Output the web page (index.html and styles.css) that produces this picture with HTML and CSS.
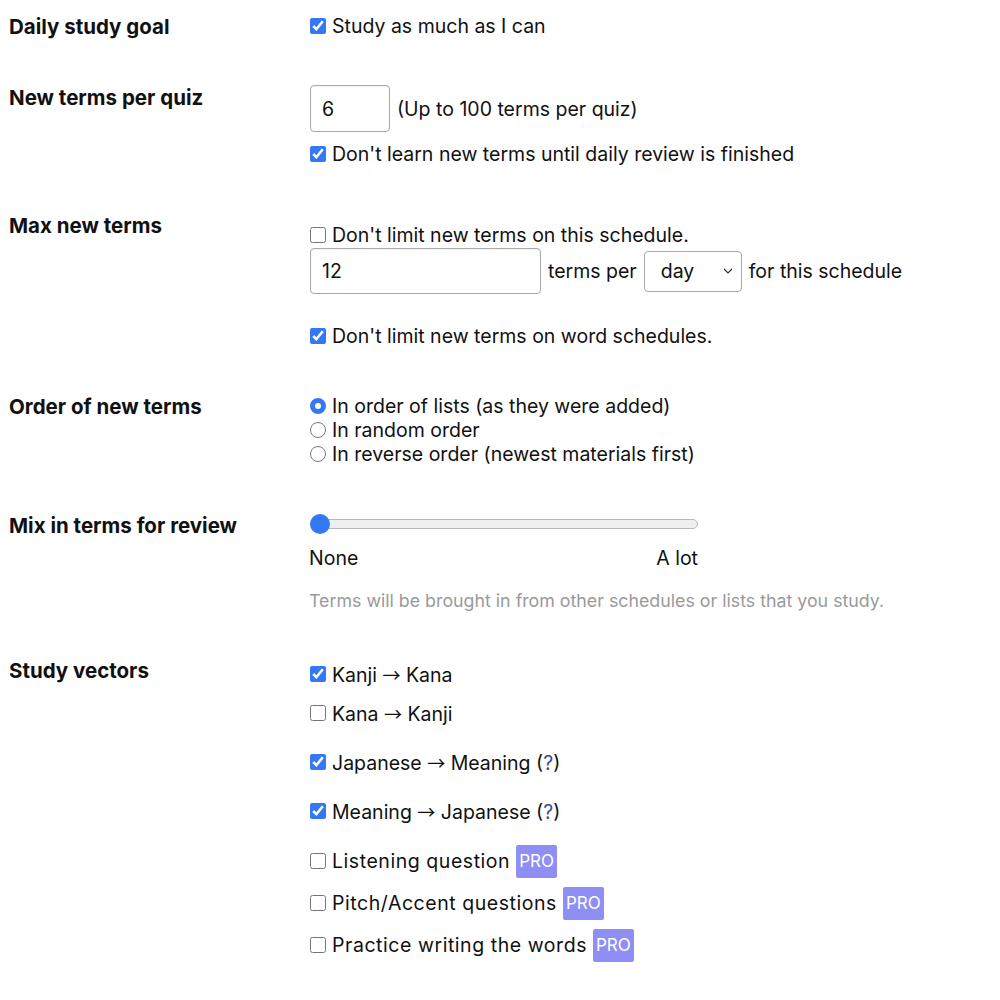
FILE: index.html
```html
<!DOCTYPE html>
<html>
<head>
<meta charset="utf-8">
<link rel="stylesheet" href="styles.css">
</head>
<body>
<div class="settings">
  <div class="row">
    <div class="label">Daily study goal</div>
    <div class="content">
      <label class="line"><input type="checkbox" class="cb" checked><span>Study as much as I can</span></label>
    </div>
  </div>

  <div class="row">
    <div class="label">New terms per quiz</div>
    <div class="content">
      <div class="inline">
        <input type="text" class="num small" value="6">
        <span>(Up to 100 terms per quiz)</span>
      </div>
      <label class="line after-input"><input type="checkbox" class="cb" checked><span>Don't learn new terms until daily review is finished</span></label>
    </div>
  </div>

  <div class="row row-max">
    <div class="label">Max new terms</div>
    <div class="content shifted">
      <label class="line"><input type="checkbox" class="cb"><span>Don't limit new terms on this schedule.</span></label>
      <div class="inline">
        <input type="text" class="num wide" value="12">
        <span>terms per</span>
        <div class="select"><span>day</span><svg width="10" height="6" viewBox="0 0 10 6"><path d="M1 1 L5 5 L9 1" fill="none" stroke="#333" stroke-width="1.2"/></svg></div>
        <span>for this schedule</span>
      </div>
      <label class="line word"><input type="checkbox" class="cb" checked><span>Don't limit new terms on word schedules.</span></label>
    </div>
  </div>

  <div class="row">
    <div class="label">Order of new terms</div>
    <div class="content">
      <label class="line"><input type="radio" name="order" class="rd" checked><span>In order of lists (as they were added)</span></label>
      <label class="line"><input type="radio" name="order" class="rd"><span>In random order</span></label>
      <label class="line"><input type="radio" name="order" class="rd"><span>In reverse order (newest materials first)</span></label>
    </div>
  </div>

  <div class="row row-mix">
    <div class="label">Mix in terms for review</div>
    <div class="content">
      <div class="slider">
        <div class="track"></div>
        <div class="thumb"></div>
      </div>
      <div class="scale"><span>None</span><span>A lot</span></div>
      <div class="hint">Terms will be brought in from other schedules or lists that you study.</div>
    </div>
  </div>

  <div class="row">
    <div class="label">Study vectors</div>
    <div class="content vectors">
      <label class="line v1"><input type="checkbox" class="cb" checked><span>Kanji <span class="arr">→</span> Kana</span></label>
      <label class="line v2"><input type="checkbox" class="cb"><span>Kana <span class="arr">→</span> Kanji</span></label>
      <label class="line v3"><input type="checkbox" class="cb" checked><span>Japanese <span class="arr">→</span> Meaning (<a class="q">?</a>)</span></label>
      <label class="line v3"><input type="checkbox" class="cb" checked><span>Meaning <span class="arr">→</span> Japanese (<a class="q">?</a>)</span></label>
      <label class="line v4"><input type="checkbox" class="cb"><span class="pro-t">Listening question</span><span class="pro">PRO</span></label>
      <label class="line v5"><input type="checkbox" class="cb"><span class="pro-t">Pitch/Accent questions</span><span class="pro">PRO</span></label>
      <label class="line v5"><input type="checkbox" class="cb"><span class="pro-t">Practice writing the words</span><span class="pro">PRO</span></label>
    </div>
  </div>
</div>
</body>
</html>
```

FILE: styles.css
```css
html, body {
  background: #fff;
}
body {
  margin: 8px;
  font-family: Inter, "Noto Sans", "Liberation Sans", sans-serif;
  font-size: 19.5px;
  color: #111;
}
.settings {
  display: flex;
  flex-direction: column;
  padding-top: 6px;
}
.row {
  display: flex;
  align-items: flex-start;
  margin-bottom: 47px;
}
.row-max {
  margin-bottom: 46px;
}
.row-mix {
  margin-bottom: 47px;
}
.label {
  width: 301px;
  flex: none;
  font-weight: 700;
  font-size: 20.5px;
  line-height: 23px;
  color: #111;
  padding: 1px 0 0 1px;
  box-sizing: border-box;
}
.content {
  display: flex;
  flex-direction: column;
  align-items: flex-start;
}
.content.shifted {
  padding-top: 10px;
}
.line {
  display: flex;
  align-items: center;
  line-height: 24px;
  height: 24px;
  white-space: nowrap;
}
.cb {
  width: 16px;
  height: 16px;
  margin: 0 6px 0 1px;
  accent-color: #3478f6;
  flex: none;
}
.rd {
  appearance: none;
  -webkit-appearance: none;
  width: 16px;
  height: 16px;
  margin: 0 6px 0 1px;
  border: 1px solid #777;
  border-radius: 50%;
  background: #fff;
  box-sizing: border-box;
  flex: none;
}
.rd:checked {
  border: 5px solid #3478f6;
}
.inline {
  display: flex;
  align-items: center;
  gap: 7px;
}
.num {
  box-sizing: border-box;
  height: 47px;
  border: 1.5px solid #a9a9a9;
  border-radius: 4px;
  padding: 0 11px;
  font-family: inherit;
  font-size: 19.5px;
  color: #111;
  margin: 0 0 0 1px;
  box-shadow: inset 0 1px 2px rgba(0,0,0,0.06);
  outline: none;
}
.num.small {
  width: 80px;
}
.num.wide {
  width: 231px;
  height: 46px;
  margin-top: 1px;
}
.after-input {
  margin-top: 10px;
}
.select {
  box-sizing: border-box;
  width: 98px;
  height: 41px;
  border: 1.5px solid #a9a9a9;
  border-radius: 4px;
  display: flex;
  align-items: center;
  justify-content: space-between;
  padding: 0 8px 0 16px;
  margin-top: 1px;
}
.word {
  margin-top: 30px;
}
.slider {
  position: relative;
  width: 388px;
  height: 24px;
  margin-left: 1px;
}
.track {
  position: absolute;
  left: 0;
  right: 0;
  top: 6px;
  height: 10px;
  box-sizing: border-box;
  border: 1px solid #b8b8b8;
  border-radius: 5px;
  background: #efefef;
}
.thumb {
  position: absolute;
  left: 0;
  top: 1px;
  width: 20px;
  height: 20px;
  border-radius: 50%;
  background: #3478f6;
}
.scale {
  width: 389px;
  display: flex;
  justify-content: space-between;
  margin-top: 9px;
  line-height: 24px;
}
.hint {
  margin-top: 21px;
  font-size: 17.8px;
  color: #9a9a9a;
  line-height: 20px;
}
.vectors {
  padding-top: 4px;
}
.arr {
  font-family: "Noto Sans CJK JP", "DejaVu Sans", sans-serif;
  font-size: 18px;
}
.v2 { margin-top: 15px; }
.v3 { margin-top: 25px; }
.v4 { margin-top: 21px; height: 34px; }
.v5 { margin-top: 8px; height: 34px; }
.pro-t {
  letter-spacing: 0.55px;
}
.q {
  color: #2d4f8f;
}
.pro {
  display: inline-block;
  background: #8e8ef4;
  color: #fff;
  font-size: 17px;
  line-height: 33px;
  height: 33px;
  padding: 0 3px;
  border-radius: 2px;
  margin-left: 6px;
}
```
